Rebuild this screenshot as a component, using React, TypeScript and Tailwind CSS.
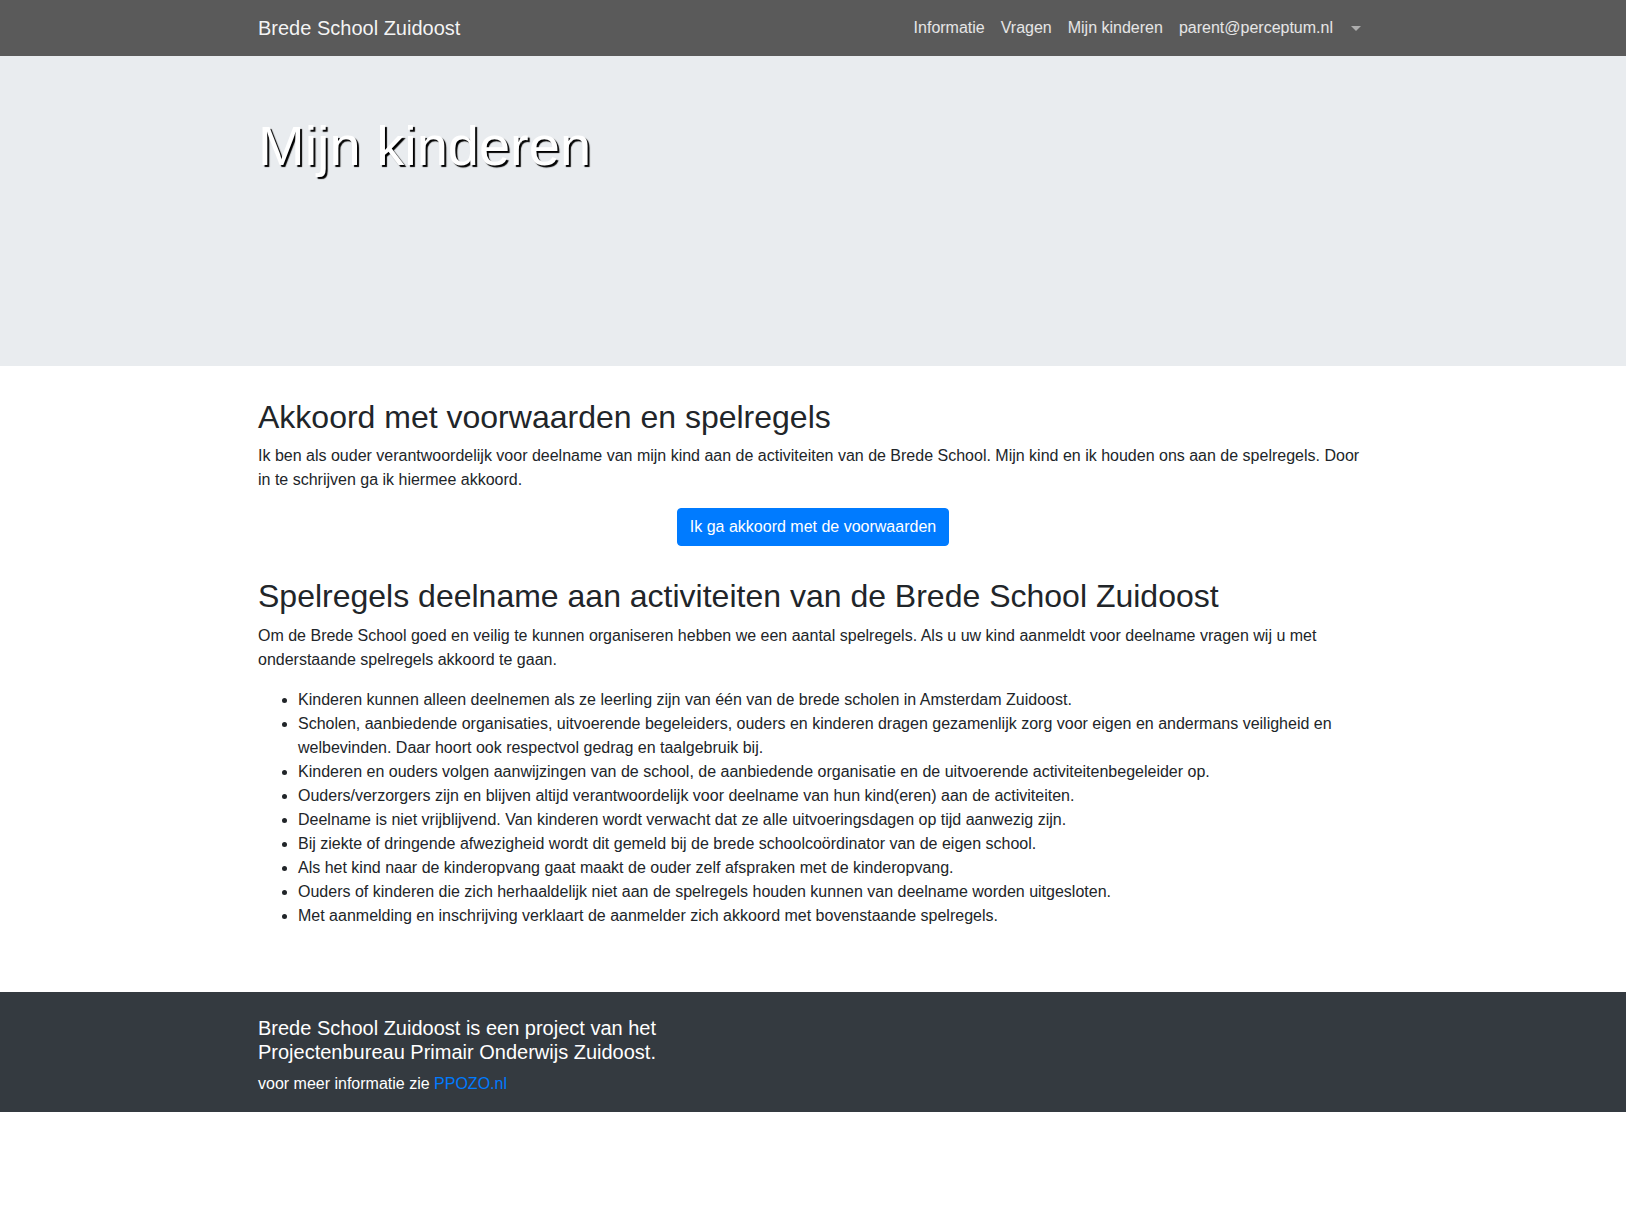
const navLinks = ["Informatie", "Vragen", "Mijn kinderen", "parent@perceptum.nl"];

const rules = [
  "Kinderen kunnen alleen deelnemen als ze leerling zijn van één van de brede scholen in Amsterdam Zuidoost.",
  "Scholen, aanbiedende organisaties, uitvoerende begeleiders, ouders en kinderen dragen gezamenlijk zorg voor eigen en andermans veiligheid en welbevinden. Daar hoort ook respectvol gedrag en taalgebruik bij.",
  "Kinderen en ouders volgen aanwijzingen van de school, de aanbiedende organisatie en de uitvoerende activiteitenbegeleider op.",
  "Ouders/verzorgers zijn en blijven altijd verantwoordelijk voor deelname van hun kind(eren) aan de activiteiten.",
  "Deelname is niet vrijblijvend. Van kinderen wordt verwacht dat ze alle uitvoeringsdagen op tijd aanwezig zijn.",
  "Bij ziekte of dringende afwezigheid wordt dit gemeld bij de brede schoolcoördinator van de eigen school.",
  "Als het kind naar de kinderopvang gaat maakt de ouder zelf afspraken met de kinderopvang.",
  "Ouders of kinderen die zich herhaaldelijk niet aan de spelregels houden kunnen van deelname worden uitgesloten.",
  "Met aanmelding en inschrijving verklaart de aanmelder zich akkoord met bovenstaande spelregels.",
];

const Navbar = () => {
  return (
    <nav className="h-14 bg-[#5a5a5a]">
      <div className="mx-auto flex h-full w-[1140px] items-center justify-between px-[15px]">
        <a href="#" className="text-[20px] leading-[30px] text-white/95">
          Brede School Zuidoost
        </a>
        <ul className="flex items-center">
          {navLinks.map((title, index) => (
            <li key={index}>
              <a href="#" className="block px-2 py-2 text-base leading-6 text-white/85">
                {title}
              </a>
            </li>
          ))}
          <li>
            <a href="#" className="flex h-10 items-center pl-2 pr-[7px]">
              {/* dropdown caret */}
              <span className="ml-[2px] h-0 w-0 border-x-[5px] border-t-[5px] border-x-transparent border-t-white/50" />
            </a>
          </li>
        </ul>
      </div>
    </nav>
  );
};

export default function App() {
  return (
    <div className="min-h-[1219px] bg-white font-['Liberation_Sans',Arial,sans-serif] text-[#212529]">
      <Navbar />

      {/* Jumbotron */}
      <div className="h-[310px] bg-[#e9ecef] pt-[56px]">
        <div className="mx-auto w-[1140px] px-[15px]">
          <h1 className="text-[56px] leading-[1.2] text-white [text-shadow:2px_2px_1px_#000]">
            Mijn kinderen
          </h1>
        </div>
      </div>

      {/* Content */}
      <div className="mx-auto w-[1140px] px-[15px] pt-8 pb-12">
        <h2 className="mb-2 text-[32px] leading-[1.2]">Akkoord met voorwaarden en spelregels</h2>
        <p className="mb-4 text-base leading-6">
          Ik ben als ouder verantwoordelijk voor deelname van mijn kind aan de activiteiten van de Brede School. Mijn kind en ik
          houden ons aan de spelregels. Door in te schrijven ga ik hiermee akkoord.
        </p>
        <div className="mb-[31px] flex justify-center">
          <button
            type="button"
            className="rounded border border-[#007bff] bg-[#007bff] px-3 py-[6px] text-base leading-6 text-white"
          >
            Ik ga akkoord met de voorwaarden
          </button>
        </div>

        <h2 className="mb-2 text-[32px] leading-[1.2]">Spelregels deelname aan activiteiten van de Brede School Zuidoost</h2>
        <p className="mb-4 text-base leading-6">
          Om de Brede School goed en veilig te kunnen organiseren hebben we een aantal spelregels. Als u uw kind aanmeldt voor
          deelname vragen wij u met onderstaande spelregels akkoord te gaan.
        </p>
        <ul className="mb-4 list-disc pl-10 text-base leading-6">
          {rules.map((rule, index) => (
            <li key={index}>{rule}</li>
          ))}
        </ul>
      </div>

      {/* Footer */}
      <footer className="bg-[#343a40] pt-6 pb-4 text-white">
        <div className="mx-auto w-[1140px] px-[15px]">
          <h5 className="mb-2 text-[20px] leading-[1.2]">
            Brede School Zuidoost is een project van het
            <br />
            Projectenbureau Primair Onderwijs Zuidoost.
          </h5>
          <p className="text-base leading-6">
            voor meer informatie zie{" "}
            <a href="#" className="text-[#007bff]">
              PPOZO.nl
            </a>
          </p>
        </div>
      </footer>
    </div>
  );
}
